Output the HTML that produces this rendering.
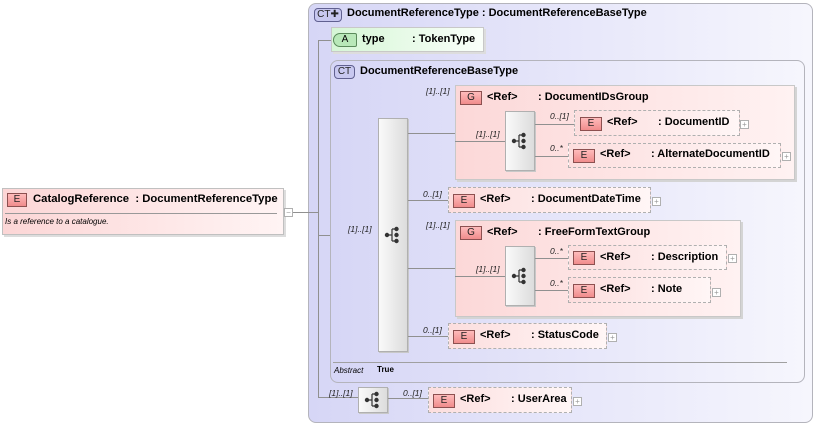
<!DOCTYPE html>
<html><head><meta charset="utf-8"><style>
*{box-sizing:border-box;margin:0;padding:0}
body{width:817px;height:426px;background:#fff;position:relative;overflow:hidden;font-family:"Liberation Sans",sans-serif;font-size:11px;color:#000}
.a{position:absolute}
.ct{position:absolute;border:1px solid #b4b4bc;border-radius:8px;background:linear-gradient(90deg,#d6d6f6,#f6f6fd)}
.pink{position:absolute;border:1px solid #c8c8c8;background:linear-gradient(90deg,#fcd8d8,#fff2f2);box-shadow:2px 2px 0 #d4d4d4}
.el{position:absolute;border:1px dashed #b0b0b0;background:linear-gradient(90deg,#fcdede,#fff6f6)}
.bdg{position:absolute;height:14px;border:1px solid #8c5050;background:linear-gradient(#fbb,#f08c8c);font-size:10px;text-align:center;line-height:12px;color:#222}
.bct{position:absolute;height:14px;border:1px solid #606090;border-radius:4px;background:#c8c8f0;font-size:10px;text-align:center;line-height:12px;color:#222}
.t{position:absolute;font-weight:bold;font-size:11px;white-space:nowrap}
.c{position:absolute;font-style:italic;font-size:8.5px;white-space:nowrap;color:#222}
.h{position:absolute;background:#909090;height:1px}
.v{position:absolute;background:#909090;width:1px}
.seq{position:absolute;border:1px solid #b0b0b0;background:linear-gradient(90deg,#fafafa,#dcdcdc);box-shadow:1px 1px 0 #c8c8c8}
.pl{position:absolute;width:9px;height:9px;border:1px solid #b0b0b0;background:#fff;font-size:8px;line-height:7px;text-align:center;color:#999}
</style></head><body>
<svg width="0" height="0" style="position:absolute"><defs><g id="si"><circle cx="-6" cy="0" r="2.2" fill="#333"/><path d="M-6 0H-1M-1 -6V6M-1 -6H3M-1 6H3" stroke="#333" stroke-width="1.2" fill="none"/><circle cx="3.5" cy="-6" r="2.2" fill="#333"/><circle cx="3.5" cy="0" r="2.2" fill="#333"/><circle cx="3.5" cy="6" r="2.2" fill="#333"/></g></defs></svg>

<div class="ct" style="left:308px;top:3px;width:505px;height:420px"></div>
<div class="bct" style="left:314px;top:8px;width:28px">CT✚</div>
<div class="t" style="left:347px;top:7px">DocumentReferenceType : DocumentReferenceBaseType</div>

<div class="a" style="left:2px;top:188px;width:282px;height:47px;border:1px solid #c0c0c0;background:linear-gradient(90deg,#fcd6d6,#fff4f4);box-shadow:2px 2px 0 #ddd"></div>
<div class="bdg" style="left:7px;top:193px;width:20px">E</div>
<div class="t" style="left:33px;top:193px;font-size:11.3px">CatalogReference&nbsp; : DocumentReferenceType</div>
<div class="h" style="left:5px;top:213px;width:272px;background:#999"></div>
<div class="a" style="left:5px;top:217px;font-size:8px;font-style:italic">Is a reference to a catalogue.</div>
<div class="pl" style="left:284px;top:208px">−</div>
<div class="h" style="left:293px;top:212px;width:25px"></div>

<div class="v" style="left:318px;top:40px;height:358px"></div>
<div class="h" style="left:318px;top:40px;width:14px"></div>
<div class="h" style="left:318px;top:235px;width:60px"></div>
<div class="h" style="left:318px;top:397px;width:40px"></div>

<div class="a" style="left:331px;top:27px;width:153px;height:25px;border:1px solid #c8c8c8;background:linear-gradient(90deg,#d6f6d6,#fafffa);box-shadow:2px 2px 0 #ddd"></div>
<div class="a" style="left:333px;top:33px;width:24px;height:14px;border:1px solid #5a8a5a;border-radius:7px 2px 2px 7px;background:#b8e8b8;font-size:10px;text-align:center;line-height:12px">A</div>
<div class="t" style="left:362px;top:33px">type</div>
<div class="t" style="left:412px;top:33px">: TokenType</div>

<div class="ct" style="left:330px;top:60px;width:475px;height:323px"></div>
<div class="bct" style="left:334px;top:65px;width:21px">CT</div>
<div class="t" style="left:360px;top:65px">DocumentReferenceBaseType</div>
<div class="c" style="left:348px;top:224px">[1]..[1]</div>

<div class="seq" style="left:378px;top:118px;width:30px;height:234px"></div>
<svg class="a" style="left:384px;top:226px" width="18" height="18"><use href="#si" x="9" y="9"/></svg>

<div class="h" style="left:408px;top:133px;width:47px"></div>
<div class="h" style="left:408px;top:200px;width:40px"></div>
<div class="h" style="left:408px;top:268px;width:47px"></div>
<div class="h" style="left:408px;top:336px;width:40px"></div>

<div class="c" style="left:426px;top:86px">[1]..[1]</div>
<div class="pink" style="left:455px;top:85px;width:340px;height:95px"></div>
<div class="bdg" style="left:460px;top:91px;width:22px">G</div>
<div class="t" style="left:487px;top:91px">&lt;Ref&gt;</div>
<div class="t" style="left:538px;top:91px">: DocumentIDsGroup</div>
<div class="h" style="left:455px;top:141px;width:50px"></div>
<div class="c" style="left:476px;top:129px">[1]..[1]</div>
<div class="seq" style="left:505px;top:111px;width:30px;height:60px"></div>
<svg class="a" style="left:511px;top:132px" width="18" height="18"><use href="#si" x="9" y="9"/></svg>
<div class="h" style="left:535px;top:124px;width:39px"></div>
<div class="h" style="left:535px;top:156px;width:33px"></div>
<div class="c" style="left:550px;top:111px">0..[1]</div>
<div class="c" style="left:550px;top:143px">0..*</div>
<div class="el" style="left:574px;top:110px;width:166px;height:26px"></div>
<div class="bdg" style="left:580px;top:117px;width:22px">E</div>
<div class="t" style="left:607px;top:116px">&lt;Ref&gt;</div>
<div class="t" style="left:658px;top:116px">: DocumentID</div>
<div class="pl" style="left:740px;top:120px">+</div>
<div class="el" style="left:568px;top:143px;width:213px;height:25px"></div>
<div class="bdg" style="left:573px;top:149px;width:22px">E</div>
<div class="t" style="left:600px;top:148px">&lt;Ref&gt;</div>
<div class="t" style="left:651px;top:148px">: AlternateDocumentID</div>
<div class="pl" style="left:782px;top:152px">+</div>

<div class="c" style="left:423px;top:189px">0..[1]</div>
<div class="el" style="left:448px;top:187px;width:203px;height:26px"></div>
<div class="bdg" style="left:453px;top:194px;width:22px">E</div>
<div class="t" style="left:480px;top:193px">&lt;Ref&gt;</div>
<div class="t" style="left:531px;top:193px">: DocumentDateTime</div>
<div class="pl" style="left:652px;top:197px">+</div>

<div class="c" style="left:426px;top:220px">[1]..[1]</div>
<div class="pink" style="left:455px;top:220px;width:286px;height:97px"></div>
<div class="bdg" style="left:460px;top:226px;width:22px">G</div>
<div class="t" style="left:487px;top:226px">&lt;Ref&gt;</div>
<div class="t" style="left:538px;top:226px">: FreeFormTextGroup</div>
<div class="h" style="left:455px;top:276px;width:50px"></div>
<div class="c" style="left:476px;top:264px">[1]..[1]</div>
<div class="seq" style="left:505px;top:246px;width:30px;height:60px"></div>
<svg class="a" style="left:511px;top:267px" width="18" height="18"><use href="#si" x="9" y="9"/></svg>
<div class="h" style="left:535px;top:258px;width:33px"></div>
<div class="h" style="left:535px;top:290px;width:33px"></div>
<div class="c" style="left:550px;top:246px">0..*</div>
<div class="c" style="left:550px;top:278px">0..*</div>
<div class="el" style="left:568px;top:245px;width:159px;height:25px"></div>
<div class="bdg" style="left:573px;top:251px;width:22px">E</div>
<div class="t" style="left:600px;top:251px">&lt;Ref&gt;</div>
<div class="t" style="left:651px;top:251px">: Description</div>
<div class="pl" style="left:728px;top:254px">+</div>
<div class="el" style="left:568px;top:277px;width:143px;height:26px"></div>
<div class="bdg" style="left:573px;top:284px;width:22px">E</div>
<div class="t" style="left:600px;top:283px">&lt;Ref&gt;</div>
<div class="t" style="left:651px;top:283px">: Note</div>
<div class="pl" style="left:712px;top:288px">+</div>

<div class="c" style="left:423px;top:325px">0..[1]</div>
<div class="el" style="left:448px;top:323px;width:159px;height:26px"></div>
<div class="bdg" style="left:453px;top:330px;width:22px">E</div>
<div class="t" style="left:480px;top:329px">&lt;Ref&gt;</div>
<div class="t" style="left:531px;top:329px">: StatusCode</div>
<div class="pl" style="left:608px;top:333px">+</div>

<div class="h" style="left:333px;top:362px;width:454px;background:#a0a0a0"></div>
<div class="a" style="left:334px;top:366px;font-size:8px;font-style:italic">Abstract</div>
<div class="a" style="left:377px;top:365px;font-size:8px;font-weight:bold">True</div>

<div class="c" style="left:329px;top:388px">[1]..[1]</div>
<div class="seq" style="left:358px;top:387px;width:30px;height:26px"></div>
<svg class="a" style="left:364px;top:391px" width="18" height="18"><use href="#si" x="9" y="9"/></svg>
<div class="h" style="left:388px;top:398px;width:40px"></div>
<div class="c" style="left:403px;top:388px">0..[1]</div>
<div class="el" style="left:428px;top:387px;width:144px;height:26px"></div>
<div class="bdg" style="left:433px;top:394px;width:22px">E</div>
<div class="t" style="left:460px;top:393px">&lt;Ref&gt;</div>
<div class="t" style="left:511px;top:393px">: UserArea</div>
<div class="pl" style="left:573px;top:397px">+</div>
</body></html>
